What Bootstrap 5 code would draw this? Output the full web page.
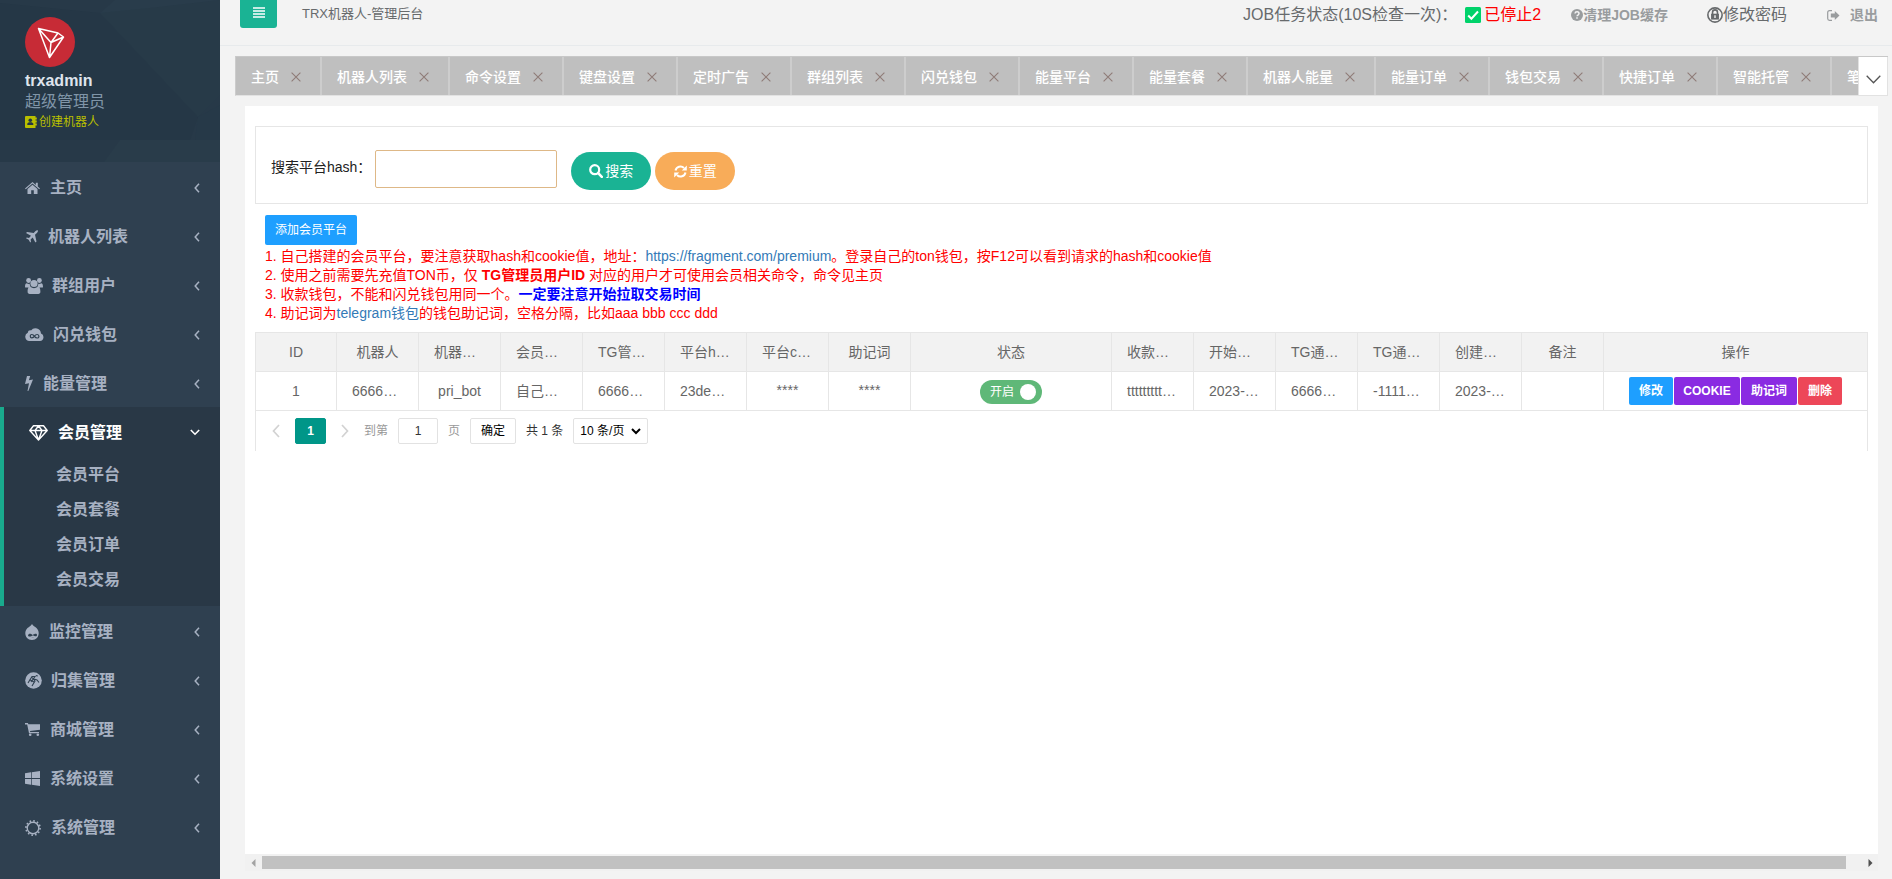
<!DOCTYPE html>
<html lang="zh-CN">
<head>
<meta charset="utf-8">
<title>TRX机器人-管理后台</title>
<link rel="stylesheet" href="https://cdn.jsdelivr.net/npm/bootstrap@5.3.0/dist/css/bootstrap.min.css">
<style>
body{font-family:"Liberation Sans","Noto Sans CJK SC",sans-serif;font-size:14px;line-height:20px;color:#676a6c;background:#f3f3f3;height:100vh;overflow:hidden}
svg{display:block;flex:none}
a{text-decoration:none}
.side{width:220px;background:#2f4050;color:#a7b1c2;flex:none}
.profile{height:162px;background:#283a49;position:relative;padding:17px 25px}
.profile .poly{position:absolute;left:0;top:0}
.profile>div,.profile>.avatar{position:relative}
.uname{font-size:16px;font-weight:700;color:#dfe4ed;line-height:22px;margin-top:3px}
.urole{font-size:16px;line-height:22px;color:#8095a8;margin-top:-1px}
.ubot{font-size:12px;line-height:16px;color:#b9bf00;gap:2px;margin-top:1px}
.mi{height:49px;padding:2px 20px 0 25px;font-size:16px;font-weight:600;color:#a7b1c2}
.mi .ic{margin-right:10px}
.mi .arr{margin-left:auto}
.active-group{background:#293846;border-left:4px solid #19aa8d;height:199px}
.active-group .mi{color:#fff}
.sub-item{height:35px;line-height:38px;padding-left:52px;font-size:16px;font-weight:600}
.topbar{height:46px;border-bottom:1px solid #e7eaec}
.burger{width:37px;height:28px;margin-left:20px;background:#1ab394;border-radius:0 0 3px 3px}
.ttl{font-size:13px;margin-left:25px;line-height:27px;color:#676a6c}
.topr{height:30px;font-size:16px;padding-right:14px}
.gry{color:#999c9e;font-size:14px;font-weight:700}
.tabs{height:40px;margin:10px 4px 0 15px;background:#bfbfbf;border-top:1px solid #c8c8c8;border-bottom:1px solid #e2e2e2;border-left:1px solid #ccc;position:relative;overflow:hidden}
.tb{height:38px;padding:2px 19px 0 15px;border-right:2px solid #cdcdcd;color:#fff;flex:none;gap:12px;font-weight:500}
.more{position:absolute;right:0;top:0;width:30px;height:38px;background:#fff;border:1px solid #e2e2e2;border-width:0 1px}
.panel{background:#fff;margin:10px 14px 0 25px;height:748px;padding:20px 10px 0}
.srch{height:78px;border:1px solid #e6e6e6;padding:23px 0 0 15px;color:#222}
.srch input{width:182px;height:38px;border:1px solid #deb887;border-radius:2px;margin-left:4px}
.pill{width:80px;height:38px;border-radius:19px;color:#fff;gap:2px;margin-top:2px}
.addb{display:inline-flex;align-items:center;justify-content:center;width:92px;height:30px;background:#1e9fff;color:#fff;font-size:12px;border-radius:2px;margin:11px 0 2px 10px}
.notes{color:#f00;line-height:19px;margin:0 0 9px 10px;height:76px}
.notes a{color:#337ab7}
.notes strong{font-weight:700}
.grid-wrap{border:1px solid #e6e6e6;border-width:1px 1px 0;height:119px}
.gt{table-layout:fixed;width:1611px;border-collapse:separate;border-spacing:0;color:#666}
.gt th,.gt td{height:39px;padding:0 15px;border-right:1px solid #e6e6e6;border-bottom:1px solid #e6e6e6;text-align:center;font-weight:400;white-space:nowrap;line-height:20px}
.gt th:last-child,.gt td:last-child{border-right:0}
.gt th{background:#f2f2f2}
.gt .l{text-align:left;padding-right:0}
.gt .stars{padding-bottom:3px}
.sw{width:62px;height:24px;border-radius:12px;background:#5fb878;color:#fff;font-size:12px;margin:2px auto 0;padding:0 6px 0 10px}
.sw i{width:16px;height:16px;border-radius:50%;background:#fff}
.op{height:28px;color:#fff;font-size:12px;font-weight:700;border-radius:2px}
.pg{font-size:12px;padding:7px 0 0 16px;height:40px;color:#333}
.pg .bx{height:26px;border:1px solid #e2e2e2;border-radius:2px;display:flex;align-items:center;justify-content:center;background:#fff}
.sbar{height:17px;margin:0 14px 0 25px;background:#f1f1f1;padding:0 5px 0 6px}
.thumb{width:1584px;height:13px;background:#c1c1c1;margin-left:6px}
</style>
</head>
<body class="d-flex">
<svg width="0" height="0" style="position:absolute">
<symbol id="larr" viewBox="0 0 6 10"><path d="M5 .8 1.2 5 5 9.2" fill="none" stroke="currentColor" stroke-width="1.5"/></symbol>
<symbol id="x" viewBox="0 0 10 10"><path d="M.6.6l8.800 8.800M9.400.6.6 9.400" fill="none" stroke="#8f7c78" stroke-width="1.1"/></symbol>
</svg>
<aside class="side">
<div class="profile">
<svg class="poly" width="220" height="162"><path d="M0 0H220V162H0z" fill="#273948"/><path d="M0 3 100 13 198 117 190 140 0 140z" fill="#253746"/><path d="M100 13 115 0H220V95L198 117z" fill="#273a48"/><path d="M100 13 150 8 220 0H115z" fill="#293c4b"/><path d="M198 117 220 105V140H195z" fill="#263948"/><path d="M120 140H220V162H104z" fill="#293c4a"/></svg>
<svg class="avatar" width="50" height="50" viewBox="0 0 50 50"><circle cx="25" cy="25" r="25" fill="#c72b36"/><path d="M13.500 11.500 33 16 38.500 20 24.500 40.500zM13.500 11.500 26 25.500 24.500 40.500M26 25.500 38.500 20M26 25.500 33 16" fill="none" stroke="#fff" stroke-width="1.5" stroke-linejoin="round"/></svg>
<div class="uname">trxadmin</div>
<div class="urole">超级管理员</div>
<div class="ubot d-flex align-items-center"><svg width="12" height="12" viewBox="0 0 12 12"><path d="M1 0h9.500v1.500h1.300v2h-1.300v1h1.300v2h-1.300v1h1.300v2h-1.300V12H1a1 1 0 0 1-1-1V1a1 1 0 0 1 1-1z" fill="#b9bf00"/><circle cx="5.300" cy="4.200" r="1.800" fill="#243645"/><path d="M2.300 9V7.500l1.500-1.300h3L8.300 7.500V9z" fill="#243645"/></svg>创建机器人</div>
</div>
<nav>
<div class="mi d-flex align-items-center"><svg class="ic" width="15" height="12" viewBox="0 0 15 12" fill="currentColor"><path d="M7.500 0 10.800 2.900V.8h2v3.800L15 6.500l-.8.8-6.700-5.700L.8 7.300 0 6.500z"/><path d="m7.500 2.700 5 4.300v5H8.800V8.200H6.200V12H2.500V7z"/></svg>主页<svg class="arr" width="6" height="10"><use href="#larr"/></svg></div>
<div class="mi d-flex align-items-center"><svg class="ic" width="13" height="13" viewBox="0 0 13 13" fill="currentColor"><path d="M12.700.3c.6.600.1 1.700-.8 2.600L10 4.800l1.500 6.700-1.100 1-2.700-5-2.100 2 .4 2.200-.8.800-1.500-2.700L1 8.300l.8-.8 2.200.4 2-2.100L1 3.100 2.100 2l6.600 1.100 1.600-1.800C11.200.3 12.200-.1 12.700.3z"/></svg>机器人列表<svg class="arr" width="6" height="10"><use href="#larr"/></svg></div>
<div class="mi d-flex align-items-center"><svg class="ic" width="18" height="16" viewBox="0 0 18 16" fill="currentColor" style="margin-right:9px"><circle cx="3.600" cy="2.500" r="2.400"/><circle cx="14.400" cy="2.500" r="2.400"/><circle cx="9" cy="5.500" r="3.600"/><path d="M0 9c0-3 .8-3.800 1.700-3.800 1 .6 2 .8 3 .6.100 1.400.5 2.100 1 2.600C4.500 8.500 3.900 9 3.400 9.600H1C.3 9.600 0 9.300 0 9zM18 9c0-3-.8-3.800-1.700-3.800-1 .6-2 .8-3 .6-.1 1.400-.5 2.100-1 2.600 1.200.1 1.800.6 2.300 1.200H17c.700 0 1-.3 1-.6zM2.600 13.800c0-4 1.200-5 2.700-5 2.400 1.900 5 1.900 7.400 0 1.500 0 2.700 1 2.700 5 0 1.300-.8 2.200-2 2.200H4.600c-1.200 0-2-.9-2-2.200z"/></svg>群组用户<svg class="arr" width="6" height="10"><use href="#larr"/></svg></div>
<div class="mi d-flex align-items-center"><svg class="ic" width="19" height="13" viewBox="0 0 19 13" style="margin-right:9px"><path d="M4.300 13A4.300 4.300 0 0 1 2.800 4.800C3 2.800 4.500 2 6 2.500A5.600 5.600 0 0 1 16 5.500 3.900 3.900 0 0 1 15 13z" fill="currentColor"/><path d="M9.500 8.300C8 6 5.300 5.900 5.300 8.200s2.700 2.300 4.200 0 4.400-2.200 4.400.1-2.900 2.200-4.400 0z" fill="none" stroke="#2f4050" stroke-width="1.200"/></svg>闪兑钱包<svg class="arr" width="6" height="10"><use href="#larr"/></svg></div>
<div class="mi d-flex align-items-center"><svg class="ic" width="8" height="15" viewBox="0 0 8 15" fill="currentColor"><path d="M2 0h3.200L3.900 4.300 8 3.500 3.300 15H2.500L4 7.200 0 8z"/></svg>能量管理<svg class="arr" width="6" height="10"><use href="#larr"/></svg></div>
<div class="active-group">
<div class="mi d-flex align-items-center"><svg class="ic" width="19" height="16" viewBox="0 0 19 16" fill="none" stroke="currentColor" stroke-width="1.400" stroke-linejoin="round"><path d="M4.500.8h10L18.200 5.500 9.500 15 .8 5.500zM.8 5.500h17.400M9.500.8l-3.500 4.700L9.500 15 13 5.500z"/></svg>会员管理<svg class="arr" width="10" height="7" viewBox="0 0 10 7"><path d="M.8 1 5 5.200 9.200 1" fill="none" stroke="currentColor" stroke-width="1.600"/></svg></div>
<div class="sub-item">会员平台</div><div class="sub-item">会员套餐</div><div class="sub-item">会员订单</div><div class="sub-item">会员交易</div>
</div>
<div class="mi d-flex align-items-center"><svg class="ic" width="14" height="16" viewBox="0 0 14 16"><path d="M7 0C8 2 10 2.500 11.500 4c4.300 4.300 2 12-4.500 12S-1.800 8.300 2.500 4C4 2.800 6 2 7 0z" fill="currentColor"/><path d="M3 11.500c.5-2.500 3-1.800 4.500-.5C9 10 12 8.800 12 11c0 2-2.500 1.200-4 .2-1.600 1-4.500 2.300-5 .3zM6 13.800q1.800-.8 3.500 0" fill="#2f4050"/></svg>监控管理<svg class="arr" width="6" height="10"><use href="#larr"/></svg></div>
<div class="mi d-flex align-items-center"><svg class="ic" width="17" height="17" viewBox="0 0 17 17" style="margin-right:9px"><circle cx="8.500" cy="8.500" r="8.300" fill="currentColor"/><path d="m3 11 4-6.500h3L6 10M7 5.500 10 9l-3 5M9 7l3 1 2 2.500M10.800 3.500l2 .5M4.500 7.500 9 10" fill="none" stroke="#2f4050" stroke-width="1.100"/></svg>归集管理<svg class="arr" width="6" height="10"><use href="#larr"/></svg></div>
<div class="mi d-flex align-items-center"><svg class="ic" width="15" height="13" viewBox="0 0 15 13" fill="currentColor"><path d="M0 0h2.900l.5 1.200H15v5.500L5 8l.2 1H14v1.200H4L2.200 1.400H0z"/><circle cx="5.200" cy="11.700" r="1.300"/><circle cx="12.800" cy="11.700" r="1.300"/></svg>商城管理<svg class="arr" width="6" height="10"><use href="#larr"/></svg></div>
<div class="mi d-flex align-items-center"><svg class="ic" width="15" height="15" viewBox="0 0 15 15" fill="currentColor"><path d="M0 2.200 6 1.300v5.800H0zM6.700 1.200 15 0v7.100H6.700zM0 7.900h6v5.800l-6-.9zM6.700 7.900H15V15l-8.300-1.200z"/></svg>系统设置<svg class="arr" width="6" height="10"><use href="#larr"/></svg></div>
<div class="mi d-flex align-items-center"><svg class="ic" width="16" height="16" viewBox="0 0 16 16" fill="none" stroke="currentColor"><circle cx="8" cy="8" r="5.800" stroke-width="1.400"/><circle cx="8" cy="8" r="7.100" stroke-width="1.600" stroke-dasharray="1.600 2.118"/></svg>系统管理<svg class="arr" width="6" height="10"><use href="#larr"/></svg></div>
</nav>
</aside>
<main class="flex-grow-1" style="min-width:0">
<header class="topbar d-flex align-items-start">
<div class="burger d-flex justify-content-center"><svg width="12" height="11" viewBox="0 0 12 11" style="margin-top:7px"><path d="M0 1h12M0 4h12M0 7h12M0 10h12" stroke="#fff" stroke-width="1.700"/></svg></div>
<div class="ttl">TRX机器人-管理后台</div>
<div class="topr d-flex align-items-center ms-auto">
<span>JOB任务状态(10S检查一次)：</span>
<svg width="16" height="16" viewBox="0 0 16 16" style="margin:0 3px 0 8px"><rect width="16" height="16" rx="1.500" fill="#00d26a"/><path d="m3.200 8.500 3.200 3.200L13 4.500" fill="none" stroke="#fff" stroke-width="2"/></svg>
<span style="color:#f00">已停止2</span>
<span class="gry d-flex align-items-center" style="margin-left:30px"><svg width="12" height="12" viewBox="0 0 12 12"><circle cx="6" cy="6" r="6" fill="#999c9e"/><path d="M4 4.500c.2-2.300 4-2.200 4 0C8 6 6 6 6 7.300M6 8.300v1.500" fill="none" stroke="#f3f3f4" stroke-width="1.500"/></svg>清理JOB缓存</span>
<span class="d-flex align-items-center" style="margin-left:39px"><svg width="16" height="16" viewBox="0 0 15 15"><circle cx="7.500" cy="7.500" r="6.700" fill="none" stroke="#676a6c" stroke-width="1.500"/><rect x="3.800" y="6.300" width="7.400" height="5.500" fill="#676a6c"/><path d="M5.200 7V5a2.300 2.300 0 0 1 4.600 0v2" fill="none" stroke="#676a6c" stroke-width="1.500"/><path d="M7.500 7.800v2.500" stroke="#f3f3f3" stroke-width="1.300"/></svg>修改密码</span>
<span class="gry d-flex align-items-center" style="margin-left:40px"><svg width="13" height="11" viewBox="0 0 13 11" style="margin-right:10px"><path d="M5 .7H2.500Q.7.700.7 2.500v6q0 1.800 1.800 1.800H5" fill="none" stroke="#999c9e" stroke-width="1.200"/><path d="M3.800 3.500h4V1L12.500 5.500 7.800 10V7.500h-4z" fill="#999c9e"/></svg>退出</span>
</div>
</header>
<div class="tabs d-flex">
<div class="tb d-flex align-items-center">主页<svg width="10" height="10"><use href="#x"/></svg></div>
<div class="tb d-flex align-items-center">机器人列表<svg width="10" height="10"><use href="#x"/></svg></div>
<div class="tb d-flex align-items-center">命令设置<svg width="10" height="10"><use href="#x"/></svg></div>
<div class="tb d-flex align-items-center">键盘设置<svg width="10" height="10"><use href="#x"/></svg></div>
<div class="tb d-flex align-items-center">定时广告<svg width="10" height="10"><use href="#x"/></svg></div>
<div class="tb d-flex align-items-center">群组列表<svg width="10" height="10"><use href="#x"/></svg></div>
<div class="tb d-flex align-items-center">闪兑钱包<svg width="10" height="10"><use href="#x"/></svg></div>
<div class="tb d-flex align-items-center">能量平台<svg width="10" height="10"><use href="#x"/></svg></div>
<div class="tb d-flex align-items-center">能量套餐<svg width="10" height="10"><use href="#x"/></svg></div>
<div class="tb d-flex align-items-center">机器人能量<svg width="10" height="10"><use href="#x"/></svg></div>
<div class="tb d-flex align-items-center">能量订单<svg width="10" height="10"><use href="#x"/></svg></div>
<div class="tb d-flex align-items-center">钱包交易<svg width="10" height="10"><use href="#x"/></svg></div>
<div class="tb d-flex align-items-center">快捷订单<svg width="10" height="10"><use href="#x"/></svg></div>
<div class="tb d-flex align-items-center">智能托管<svg width="10" height="10"><use href="#x"/></svg></div>
<div class="tb d-flex align-items-center">笔</div>
<div class="more d-flex align-items-center justify-content-center"><svg width="15" height="9" viewBox="0 0 15 9" style="margin-top:6px"><path d="m.7.700 6.800 7 6.800-7" fill="none" stroke="#555" stroke-width="1.300"/></svg></div>
</div>
<section class="panel">
<div class="srch d-flex align-items-start">
<span style="margin-top:7px">搜索平台hash：</span><input type="text" class="bg-white">
<div class="pill d-flex align-items-center justify-content-center" style="background:#1ab394;margin-left:14px"><svg width="14" height="14" viewBox="0 0 14 14" fill="none" stroke="#fff"><circle cx="5.700" cy="5.700" r="4.500" stroke-width="2.200"/><path d="m9.200 9.200 3.600 3.600" stroke-width="2.600" stroke-linecap="round"/></svg>搜索</div>
<div class="pill d-flex align-items-center justify-content-center" style="background:#f8ac59;margin-left:4px"><svg width="13" height="13" viewBox="0 0 13 13"><path d="M1.500 5.500A5 5 0 0 1 10 3M11.500 7.500A5 5 0 0 1 3 10" fill="none" stroke="#fff" stroke-width="2"/><path d="M12.800.5v5H7.800zM.2 12.500v-5h5z" fill="#fff"/></svg>重置</div>
</div>
<div class="addb">添加会员平台</div>
<div class="notes">1. 自己搭建的会员平台，要注意获取hash和cookie值，地址：<a href="#">https://fragment.com/premium</a>。登录自己的ton钱包，按F12可以看到请求的hash和cookie值<br>2. 使用之前需要先充值TON币，仅 <strong>TG管理员用户ID</strong> 对应的用户才可使用会员相关命令，命令见主页<br>3. 收款钱包，不能和闪兑钱包用同一个。<strong style="color:#00f">一定要注意开始拉取交易时间</strong><br>4. 助记词为<a href="#">telegram钱包</a>的钱包助记词，空格分隔，比如aaa bbb ccc ddd</div>
<div class="grid-wrap">
<table class="gt">
<colgroup><col style="width:81px"><col span="7" style="width:82px"><col style="width:201px"><col span="6" style="width:82px"><col style="width:263px"></colgroup>
<tr><th>ID</th><th>机器人</th><th class="l">机器…</th><th class="l">会员…</th><th class="l">TG管…</th><th class="l">平台h…</th><th class="l">平台c…</th><th>助记词</th><th>状态</th><th class="l">收款…</th><th class="l">开始…</th><th class="l">TG通…</th><th class="l">TG通…</th><th class="l">创建…</th><th>备注</th><th>操作</th></tr>
<tr><td>1</td><td class="l">6666…</td><td>pri_bot</td><td class="l">自己…</td><td class="l">6666…</td><td class="l">23de…</td><td class="stars">****</td><td class="stars">****</td><td><div class="sw d-flex align-items-center justify-content-between">开启<i></i></div></td><td class="l">ttttttttt…</td><td class="l">2023-…</td><td class="l">6666…</td><td class="l">-1111…</td><td class="l">2023-…</td><td></td><td><div class="d-flex justify-content-center" style="gap:1px"><div class="op d-flex align-items-center justify-content-center" style="width:44px;background:#1e9fff">修改</div><div class="op d-flex align-items-center justify-content-center" style="width:66px;background:#8a2be2">COOKIE</div><div class="op d-flex align-items-center justify-content-center" style="width:56px;background:#8a2be2">助记词</div><div class="op d-flex align-items-center justify-content-center" style="width:44px;background:#ed4758">删除</div></div></td></tr>
</table>
<div class="pg d-flex">
<svg width="8" height="14" viewBox="0 0 8 14" style="margin-top:6px"><path d="M7 1 1.500 7 7 13" fill="none" stroke="#d2d2d2" stroke-width="1.700"/></svg>
<div class="bx fw-bold" style="width:31px;margin-left:15px;background:#009688;border-color:#009688;color:#fff">1</div>
<svg width="8" height="14" viewBox="0 0 8 14" style="margin:6px 0 0 15px"><path d="m1 1 5.500 6L1 13" fill="none" stroke="#d2d2d2" stroke-width="1.700"/></svg>
<span style="margin:3px 10px 0 15px;color:#999">到第</span><div class="bx" style="width:40px">1</div><span style="margin:3px 0 0 10px;color:#999">页</span>
<div class="bx" style="width:46px;margin-left:10px;color:#000">确定</div><span style="margin:3px 0 0 10px">共 1 条</span>
<div class="bx" style="width:75px;margin-left:10px;gap:7px;color:#000">10 条/页<svg width="10" height="7" viewBox="0 0 10 7"><path d="m1 1 4 4 4-4" fill="none" stroke="#000" stroke-width="2"/></svg></div>
</div>
</div>
</section>
<div class="sbar d-flex align-items-center"><svg width="5" height="8" viewBox="0 0 5 8"><path d="M4.500 0v8L.5 4z" fill="#a3a3a3"/></svg><div class="thumb"></div><svg class="ms-auto" width="5" height="8" viewBox="0 0 5 8"><path d="M.5 0v8l4-4z" fill="#505050"/></svg></div>
</main>
<script src="https://cdn.jsdelivr.net/npm/bootstrap@5.3.0/dist/js/bootstrap.bundle.min.js"></script>
</body>
</html>
